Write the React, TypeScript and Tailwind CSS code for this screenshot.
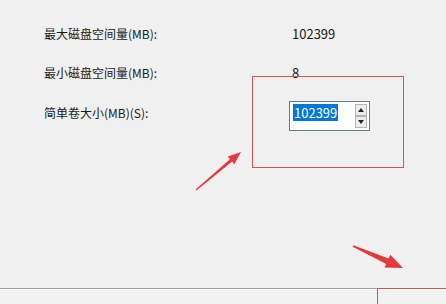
const font = { fontFamily: '"Microsoft YaHei", "Noto Sans CJK SC", "Noto Sans", sans-serif' };

function arrow(tx: number, ty: number, hx: number, hy: number, tail: number, shaft: number, headLen: number, headW: number) {
  const dx = hx - tx;
  const dy = hy - ty;
  const len = Math.hypot(dx, dy);
  const ux = dx / len;
  const uy = dy / len;
  const nx = -uy;
  const ny = ux;
  const bx = hx - ux * headLen;
  const by = hy - uy * headLen;
  const pts = [
    [tx + nx * tail, ty + ny * tail],
    [bx + nx * shaft, by + ny * shaft],
    [bx + nx * headW, by + ny * headW],
    [hx, hy],
    [bx - nx * headW, by - ny * headW],
    [bx - nx * shaft, by - ny * shaft],
    [tx - nx * tail, ty - ny * tail],
  ];
  return pts.map((p) => p.map((v) => v.toFixed(1)).join(",")).join(" ");
}

function SpinButton({ up }: { up?: boolean }) {
  return (
    <div className="flex h-[12px] w-[12px] items-center justify-center border border-[#b5b5b5] bg-[#ececec]">
      <svg width="6" height="4" viewBox="0 0 6 4">
        <polygon points={up ? "0,4 6,4 3,0" : "0,0 6,0 3,4"} fill="#222" />
      </svg>
    </div>
  );
}

export default function App() {
  return (
    <div className="relative flex h-[304px] w-[446px] flex-col overflow-hidden bg-[#f0f0f0] text-[12px] text-[#1a1a1a]" style={font}>
      <div className="flex flex-col pl-[44px] pt-[26px]">
        <div className="grid h-[16px] grid-cols-[248px_1fr] items-center leading-[16px]">
          <span>最大磁盘空间量(MB):</span>
          <span className="text-[13px]">102399</span>
        </div>
        <div className="mt-[23px] grid h-[16px] grid-cols-[248px_1fr] items-center leading-[16px]">
          <span>最小磁盘空间量(MB):</span>
          <span className="text-[13px]">8</span>
        </div>
        <div className="mt-[20px] grid grid-cols-[245px_1fr] items-start">
          <span className="mt-[4px] leading-[16px]">简单卷大小(MB)(S):</span>
          <div className="flex h-[30px] w-[81px] items-stretch border border-[#5a7d94] bg-white">
            <div className="flex flex-1 items-start pl-[3px] pt-[2px]">
              <span className="bg-[#0078d7] px-[1px] text-[13px] leading-[17px] text-white">102399</span>
            </div>
            <div className="flex flex-col justify-center gap-[0px] pr-[2px]">
              <SpinButton up />
              <SpinButton />
            </div>
          </div>
        </div>
      </div>

      <div className="flex-1" />

      <div className="h-[16px] border-t border-[#a0a0a0]">
        <div className="h-full border-t border-white bg-[#f2f2f2]" />
      </div>

      <div className="pointer-events-none absolute left-[252px] top-[76px] h-[92px] w-[152px] border border-[#d9534f]" />
      <div className="pointer-events-none absolute left-[377px] top-[288px] h-[40px] w-[100px] border border-[#d9534f]" />

      <svg className="pointer-events-none absolute inset-0" width="446" height="304" viewBox="0 0 446 304">
        <polygon points={arrow(196, 190, 241, 152, 0.6, 1.6, 13, 5)} fill="#e5383b" />
        <polygon points={arrow(353, 246, 403, 268, 0.8, 3, 17, 7)} fill="#e5383b" />
      </svg>
    </div>
  );
}
